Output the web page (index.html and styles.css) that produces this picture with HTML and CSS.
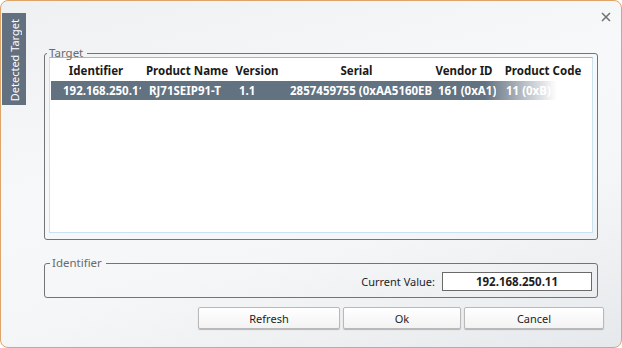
FILE: index.html
```html
<!DOCTYPE html>
<html>
	<head>
		<meta charset="utf-8">
		<link rel="stylesheet" href="styles.css">
		<title>Detected Target</title>
	</head>
	<body>
		<div class="window">
			<div class="side">
				<div class="tab"><span>Detected Target</span></div>
			</div>
			<div class="main">
				<div class="topbar">
					<div class="close">
						<svg width="10" height="10" viewBox="0 0 10 10"><path d="M1 1L9 9M9 1L1 9" stroke="#707070" stroke-width="1.5" fill="none"/></svg>
					</div>
				</div>
				<fieldset class="group target">
					<legend>Target</legend>
					<div class="listbox">
						<table class="grid">
							<colgroup>
								<col class="c1"><col class="c2"><col class="c3"><col class="c4"><col class="c5"><col class="c6">
							</colgroup>
							<thead>
								<tr>
									<th>Identifier</th>
									<th>Product Name</th>
									<th>Version</th>
									<th>Serial</th>
									<th>Vendor ID</th>
									<th>Product Code</th>
								</tr>
							</thead>
							<tbody>
								<tr class="selected">
									<td class="v1">192.168.250.11</td>
									<td class="v2">RJ71SEIP91-T</td>
									<td class="v3">1.1</td>
									<td class="v4">2857459755 (0xAA5160EB)</td>
									<td class="v5">161 (0xA1)</td>
									<td class="v6">11 (0xB)</td>
								</tr>
							</tbody>
						</table>
					</div>
				</fieldset>
				<fieldset class="group ident">
					<legend>Identifier</legend>
					<div class="valuerow">
						<span class="label">Current Value:</span>
						<div class="textbox">192.168.250.11</div>
					</div>
				</fieldset>
				<div class="buttons">
					<button class="btn refresh">Refresh</button>
					<button class="btn ok">Ok</button>
					<button class="btn cancel">Cancel</button>
				</div>
			</div>
		</div>
	</body>
</html>
```
FILE: styles.css
```css
*{
	margin: 0;
	padding: 0;
	box-sizing: border-box;
}
body{
	background: #ffffff;
	font-family: "Noto Sans", "Open Sans", sans-serif;
	font-size: 11px;
	color: #1e1e1e;
}
.window{
	width: 622px;
	height: 348px;
	border: 1px solid #dfa468;
	border-radius: 8px;
	background: linear-gradient(165deg, #eff0f2 0%, #f7f8f9 40%, #f5f6f7 65%, #e6e9ec 100%);
	display: flex;
	overflow: hidden;
}
.side{
	width: 25px;
	padding-top: 12px;
	padding-left: 1px;
}
.tab{
	width: 24px;
	height: 92px;
	background: #627080;
	color: #ffffff;
	display: flex;
	align-items: center;
	justify-content: center;
}
.tab span{
	writing-mode: vertical-rl;
	transform: rotate(180deg);
	white-space: nowrap;
	font-size: 11px;
	margin-top: 2px;
}
.main{
	flex: 1;
	padding: 0 23px 0 18px;
}
.topbar{
	height: 48px;
	margin-right: -23px;
	padding: 11px 10px 0 0;
	display: flex;
	justify-content: flex-end;
	align-items: flex-start;
}
.close{
	width: 10px;
	height: 10px;
	display: flex;
}
.group{
	border: 1px solid #747474;
	border-radius: 3px;
	min-width: 0;
}
.group legend{
	padding: 0 4px 0 2px;
	line-height: 8px;
	color: #6a6a6a;
	font-size: 11.5px;
}
.target{
	padding: 0 4px 6px 4px;
}
.target legend{
	margin-left: -2px;
}
.listbox{
	height: 176px;
	background: #ffffff;
	border: 1px solid #c9e1f1;
	border-top-color: #8cbde0;
	padding-left: 1px;
	overflow: hidden;
}
.grid{
	width: 539px;
	border-collapse: collapse;
	table-layout: fixed;
}
.c1{ width: 90px; }
.c2{ width: 92px; }
.c3{ width: 48px; }
.c4{ width: 151px; }
.c5{ width: 64px; }
.c6{ width: 94px; }
.grid th{
	height: 23px;
	font-weight: bold;
	font-size: 11.5px;
	text-align: center;
	white-space: nowrap;
	overflow: hidden;
	color: #1a1a1a;
	padding-top: 2px;
}
.grid td{
	height: 19px;
	font-weight: bold;
	font-size: 11.5px;
	color: #ffffff;
	white-space: nowrap;
	overflow: hidden;
	text-align: left;
}
.selected{
	background: linear-gradient(to right, #637281 0, #637281 434px, rgba(99,114,129,0) 506px);
}
.v1{ padding-left: 12px; }
.v2{ padding-left: 8px; }
.v3{ padding-left: 6px; }
.v4{ padding-left: 9px; }
.v5{ padding-left: 6px; }
.v6{ padding-left: 10px; }
.ident{
	margin-top: 19px;
	padding: 5px 5px 6px 5px;
}
.ident legend{
	margin-left: 0;
}
.valuerow{
	display: flex;
	justify-content: flex-end;
	align-items: center;
	gap: 7px;
}
.label{
	color: #1e1e1e;
}
.textbox{
	width: 150px;
	height: 19px;
	border: 1px solid #6a6a6a;
	background: #ffffff;
	font-weight: bold;
	font-size: 11.5px;
	text-align: center;
	line-height: 17px;
}
.buttons{
	margin-top: 9px;
	margin-right: -6px;
	display: flex;
	justify-content: flex-end;
	gap: 3px;
}
.btn{
	height: 22px;
	border: 1px solid #b9b9b9;
	border-radius: 2px;
	background: linear-gradient(#ffffff, #f3f3f3);
	box-shadow: 0 1px 1px rgba(0,0,0,0.25);
	font-family: "Noto Sans", "Open Sans", sans-serif;
	font-size: 11px;
	color: #1e1e1e;
}
.refresh{ width: 142px; }
.ok{ width: 118px; }
.cancel{ width: 140px; }
```
